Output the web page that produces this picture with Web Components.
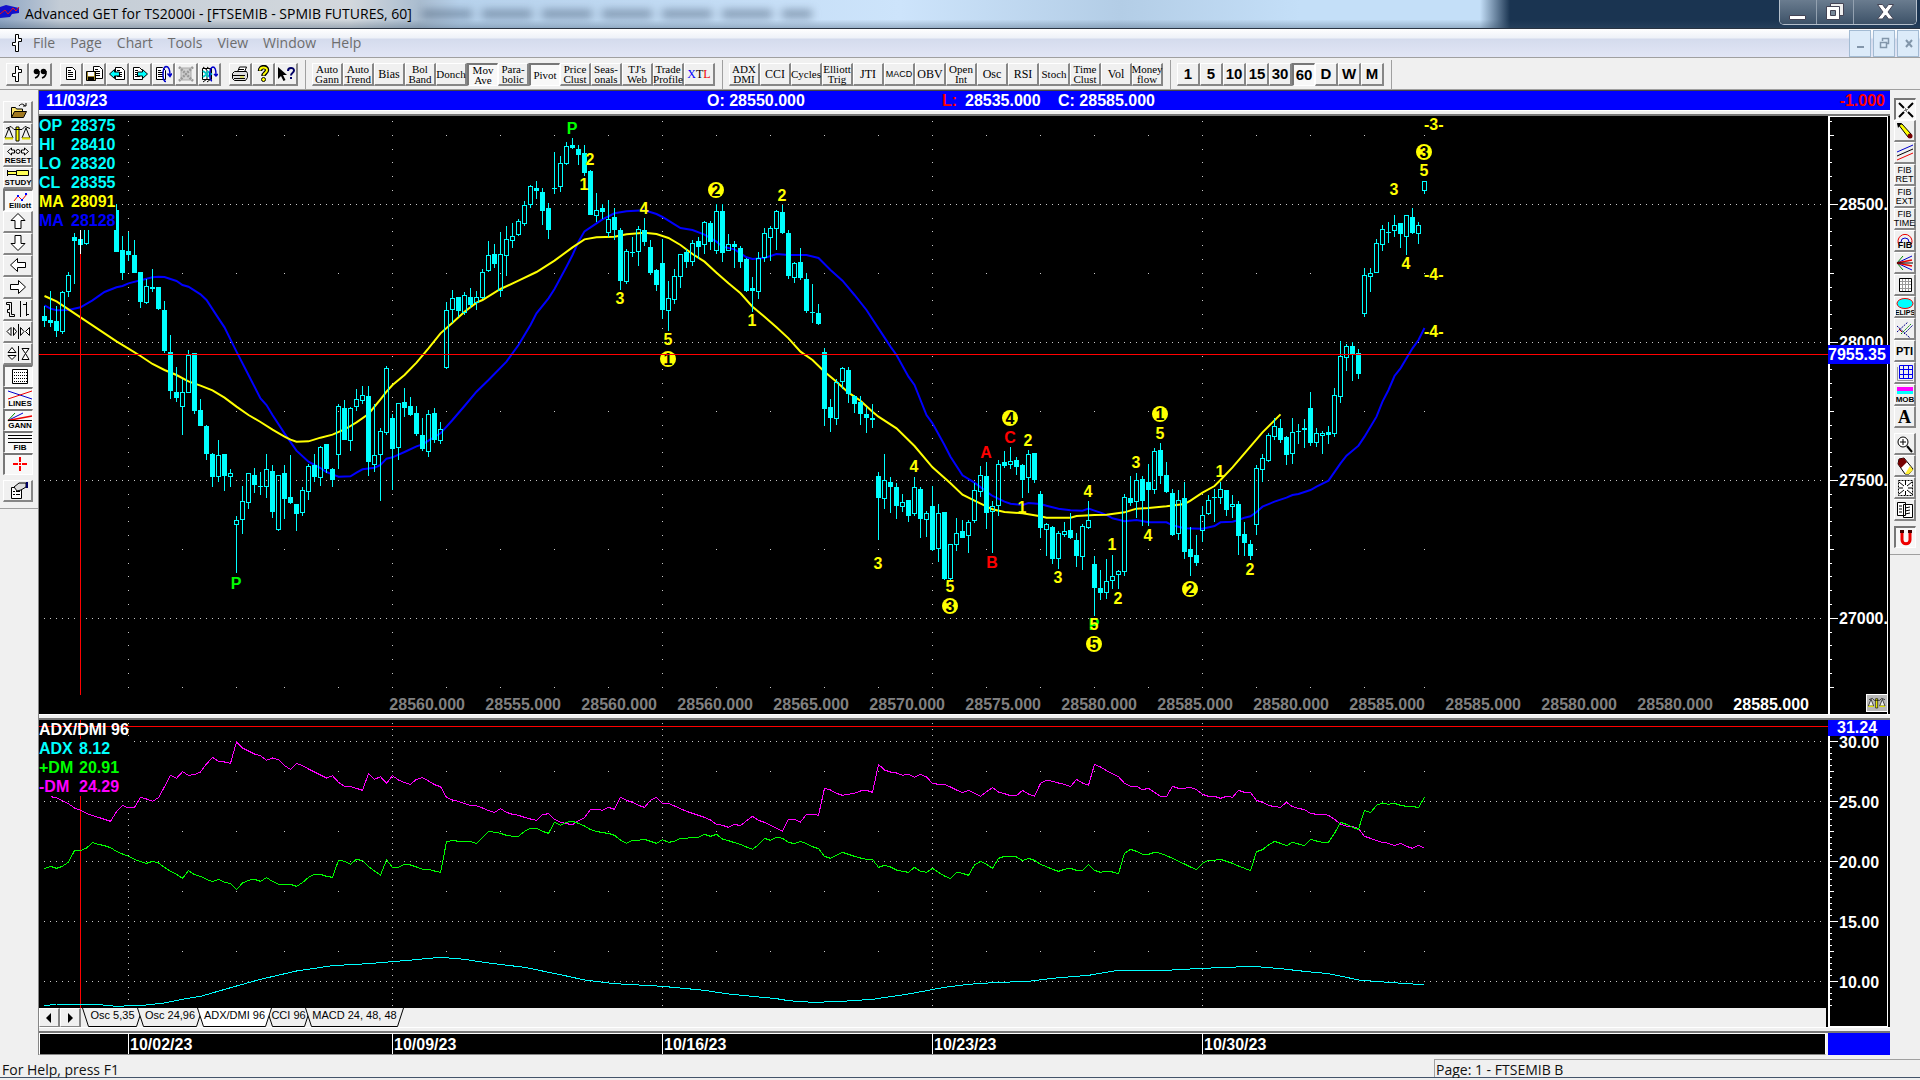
<!DOCTYPE html>
<html lang="en">
<head>
<meta charset="utf-8">
<title>Advanced GET for TS2000i</title>
<style>
    html, body {
        margin: 0;
        background: #f0f0f0;
    }
    body {
        font-family: "Liberation Sans", Arial, sans-serif;
        overflow: hidden;
    }
</style>
</head>
<body>
<get-app></get-app>

<script>
const UI_FONT = '"Open Sans", "Noto Sans", sans-serif'

// Icon drawings: [width, height, markup]
const page = (x, y) => `<path d="M${x}.5 ${y}.5h6l3 3v9h-9z" fill="#fff" stroke="#000"/><path d="M${x + 2} ${y + 3}.5h3m-3 2h5m-5 2h5m-5 2h5" stroke="#000" fill="none"/>`
const scales = `
    <path d="M13 3h3v14h-3z" fill="#ff0" stroke="#000"/>
    <path d="M3 4.5l5-2 3 3h8l3-3 5 2" fill="none" stroke="#000"/>
    <path d="M6 4L2 14h8L6 4M23 4l-4 10h8l-4-10" fill="#f0f0f0" stroke="#000"/>
    <path d="M2 14.5h8M19 14.5h8" stroke="#dd0" stroke-width="2"/>`
const label = (text, x, y, size = 8) => `<text x="${x}" y="${y}" font-size="${size}" text-anchor="middle" font-weight="bold" font-family="Liberation Sans, sans-serif">${text}</text>`

const ICONS = {
    app: [20, 18, '<path d="M0 2l6-2 13 3v5l-7 1-2 3-10 1z" fill="#11c"/><path d="M0 9l5-4 3 4 5-6 3 3 3-4" stroke="#e11" fill="none" stroke-width="1"/>'],
    bar: [12, 20, '<path d="M4.500 18.500v-6h-3v-3h3v-8h3v4h3v3h-3v10z" fill="#fff" stroke="#000"/>'],
    barSmall: [16, 18, '<path d="M6.500 16.500v-5h-3v-3h3v-7h3v3h3v3h-3v9z" fill="#fff" stroke="#000"/>'],
    quote: [16, 16, '<circle cx="4.500" cy="5.500" r="2.800"/><path d="M7 5c.5 4-1 6-4 7" fill="none" stroke="#000" stroke-width="1.500"/><circle cx="11.500" cy="5.500" r="2.800"/><path d="M14 5c.5 4-1 6-4 7" fill="none" stroke="#000" stroke-width="1.500"/>'],
    doc: [16, 16, page(3, 1)],
    save: [18, 18, page(8, 1) + '<path d="M1.500 6.500h9v9h-9z" fill="#a08a30" stroke="#000"/><path d="M3 7h6v4H3z" fill="#fff"/><path d="M3 12h6v4H3z"/>'],
    prev: [18, 16, page(7, 1) + '<path d="M1.500 8l5-4.500v2.500h5v4h-5v2.500z" fill="#0ff" stroke="#000"/>'],
    next: [18, 16, page(2, 1) + '<path d="M16.500 8l-5-4.500v2.500h-5v4h5v2.500z" fill="#0ff" stroke="#000"/>'],
    flip: [18, 18, page(2, 2) + '<path d="M12 16.500c-4 0-4-14 0-15 4 0 4 6 4 9m-2.500-2l2.500 3 2-3" fill="none" stroke="#00c" stroke-width="1.500"/>'],
    cross: [18, 18, '<path d="M4 3h10v12H4z" fill="#d0d0d0" stroke="#aaa"/><path d="M2 2l14 14M16 2L2 16" stroke="#999" stroke-width="2.500" stroke-dasharray="2 1"/>'],
    shift: [18, 18, '<path d="M2.500 3.500h9v11h-9z" fill="#fff" stroke="#000"/><path d="M3 2l4 3v9l-4 3M7 2l4 3v9l-4 3" fill="none" stroke="#000"/><path d="M3 6l4 3-4 3M7 6l4 3-4 3" stroke="#0cc" stroke-width="2" fill="none"/><path d="M12 16c-3-1-3-13 1-14 3 0 3 5 3 8m-2-1l2 2 2-2" fill="none" stroke="#00c" stroke-width="1.500"/>'],
    print: [18, 16, '<path d="M6.500 6l2-5h7l-2 5z" fill="#fff" stroke="#000"/><path d="M1.500 7.500l2-2h12l1 2v4l-2 3h-11l-2-2z" fill="#ddd" stroke="#000"/><path d="M2 9.500h12M3 12.500h11M8 3.500h5" stroke="#000"/><path d="M9 11h4" stroke="#dd0" stroke-width="1"/>'],
    help: [16, 18, '<path d="M5 6c0-5 7-5 7-1 0 3-3.500 3-3.500 6" fill="none" stroke="#000" stroke-width="4.500"/><path d="M5 5.500c0-4 7-4 7-.5 0 3-3.500 3-3.500 5.500" fill="none" stroke="#ff0" stroke-width="2"/><circle cx="8.500" cy="14.500" r="2" fill="#ff0" stroke="#000"/>'],
    whats: [18, 18, '<path d="M1 2v12l3-3 2.500 5 2-1-2.500-5h4z"/><path d="M11 6c0-4 6-4 6-.5 0 2.500-3 2-3 5M14 12v2" fill="none" stroke="#006" stroke-width="2"/>'],

    open: [28, 19, '<path d="M7.500 15.500v-10h4l1 1.500h6v3" fill="#ffe870" stroke="#000"/><path d="M7.500 15.500l3-6h12l-3 6z" fill="#a07820" stroke="#000"/><path d="M15 4c2-3 5-2 6 0m1-3v3h-3" stroke="#000" fill="none"/>'],
    scales: [30, 19, scales],
    reset: [28, 19, '<path d="M3.500 5.500l4-3.500v2h3v3h-3v2zM24.500 5.500l-4-3.500v2h-3v3h3v2z" fill="#fff" stroke="#000"/><circle cx="14" cy="5.500" r="2" fill="#fff" stroke="#000"/>' + label('RESET', 14, 17)],
    study: [28, 19, '<path d="M3.500 2v6M3.500 3.500h9v3h-9M12.500 2.500h12v5h-12z" fill="#ff5" stroke="#000"/>' + label('STUDY', 14, 17)],
    elliott: [28, 19, '<path d="M9 10l4-5 4 4 5-6" fill="none" stroke="#e00"/><path d="M12 4h2v2h-2zM16 8h2v2h-2zM20 2h2v2h-2z" fill="#00f"/>' + label('Elliott', 15, 17, 8)],
    up: [28, 19, '<path d="M14 1.500l7 7h-4v8h-6v-8H7z" fill="#fff" stroke="#000"/>'],
    down: [28, 19, '<path d="M14 16.500l7-7h-4v-8h-6v8H7z" fill="#fff" stroke="#000"/>'],
    left: [28, 19, '<path d="M6.500 9l7-6.500v4h8v5h-8v4z" fill="#fff" stroke="#000"/>'],
    right: [28, 19, '<path d="M21.500 9l-7-6.500v4h-8v5h8v4z" fill="#fff" stroke="#000"/>'],
    bars: [28, 19, '<path d="M2.500 4.500v-2h5v12h3v2h-5v-4h-2v-3h2v-5zM16.500 1v16M19 4.500h3M22.500 2v14M22 14.500h3" fill="none" stroke="#000"/>'],
    narrow: [28, 19, '<path d="M7 5.500v8L3 9.500zM9.500 5.500v8l3-4zM16.500 5.500v8l3.500-4zM25.500 5.500v8l-4-4z" fill="#fff" stroke="#000"/><path d="M14.500 2v15" stroke="#000"/>'],
    tall: [28, 19, '<path d="M4 8.500h8L8 3.500zM4 11.500h8l-4 4zM18 4.500h7l-3.500 5zM18 15.500h7l-3.500-6z" fill="#fff" stroke="#000"/><path d="M14.500 2v15" stroke="#000"/>'],
    dots: [28, 19, '<path d="M7.500 2.500h15v14h-15z" fill="#fff" stroke="#000"/><path d="M9 5.500h13M9 8.500h13M9 11.500h13M9 14.500h13" stroke="#000" stroke-dasharray="1 1"/>'],
    lines: [28, 19, '<path d="M3 2l24 8" stroke="#00c"/><path d="M3 10l24-8" stroke="#e00"/>' + label('LINES', 15, 17)],
    gann: [28, 19, '<path d="M3 9.500L10 2" stroke="#080"/><path d="M3 9.500L18 2" stroke="#00c"/><path d="M3 9.500L27 5" stroke="#e00" stroke-width="1.500"/><path d="M3 9.500h24" stroke="#000"/>' + label('GANN', 15, 17)],
    fib: [28, 19, '<path d="M3 2.500h24M3 5.500h24M3 9.500h24" stroke="#000"/>' + label('FIB', 15, 17)],
    plus: [28, 19, '<path d="M15 2v5M15 11v5M8 9h5M17 9h5M15 8v2" stroke="#f00" stroke-width="2"/>'],
    props: [28, 19, '<path d="M7.500 6.500h10v11h-10z" fill="#fff" stroke="#000"/><path d="M9 10.500h2m1 0h4m-7 3h2m1 0h4" stroke="#000"/><path d="M10 6l5-4h7v4l-5 3-4 1z" fill="#ddd" stroke="#000"/><path d="M22 1h2v6h-2z" fill="#006"/>'],

    x: [18, 18, '<path d="M2 2l5 5M16 2l-5 5M2 16l5-5M16 16l-5-5" stroke="#000" stroke-width="2"/><path d="M8 8h2v2H8z" fill="#fff" stroke="#000" stroke-dasharray="1 1"/>'],
    pencil: [18, 18, '<path d="M2 2l4 0 9 10-3 3z" fill="#ff0" stroke="#000"/><path d="M1 1h5l-4 5z"/><circle cx="14" cy="14" r="2.500" fill="#700"/>'],
    channel: [18, 18, '<path d="M1 8l16-7" stroke="#00c"/><path d="M1 12l16-7" stroke="#000"/><path d="M1 16l16-7" stroke="#e00"/>'],
    arc: [18, 18, '<path d="M3 13a7 7 0 1 1 12 0" fill="none" stroke="#e00"/><path d="M5 10a4 4 0 1 1 8 0" fill="none" stroke="#00c"/>' + label('FIB', 9, 16, 9)],
    fan: [18, 18, '<path d="M1 9L7 2M1 9l6 7" stroke="#080"/><path d="M1 9l15-7M1 9l15 7" stroke="#00c"/><path d="M1 9l15-3M1 9l15 3" stroke="#e00" stroke-width="1.500"/><path d="M1 9h16" stroke="#000"/>'],
    grid: [18, 18, '<path d="M3.500 2.500h12v13h-12z" fill="#fff" stroke="#000"/><path d="M4 5.500h11M4 8.500h11M4 12.500h11M6.500 3v12M9.500 3v12M12.500 3v12" stroke="#999"/>'],
    ellipse: [18, 18, '<ellipse cx="9" cy="5.500" rx="8" ry="5" fill="#0ff" stroke="#e00"/>' + label('ELIPS', 9, 17, 7)],
    fork: [18, 18, '<path d="M1 12L12 2M8 14l9-9M1 6l13 12" stroke="#008" stroke-dasharray="2 1"/><path d="M3 9l3 3" stroke="#a00"/><path d="M5 14L15 4" stroke="#080" stroke-dasharray="2 1"/>'],
    bluegrid: [18, 18, '<path d="M3.500 1.500h13v13h-13zM7.500 2v12M12.500 2v12M4 5.500h12M4 10.500h12" fill="none" stroke="#00e"/><path d="M1.500 3v13.500H17" fill="none" stroke="#999"/>'],
    mob: [18, 18, '<path d="M1 1h16v4H1z" fill="#f0f"/><path d="M1 5h16v3H1z" fill="#0ff"/>' + label('MOB', 9, 16, 8)],
    zoom: [18, 18, '<circle cx="7" cy="7" r="5" fill="#fff" stroke="#000"/><path d="M4 7h6M7 4v6" stroke="#000"/><path d="M11 11l5 6" stroke="#000" stroke-width="2"/>'],
    eraser: [18, 18, '<path d="M3 2l5-1 9 11-4 5h-4L2 7z" fill="#fff" stroke="#000"/><path d="M3 2l5-1 3 4-6 6-3-4z" fill="#700"/><path d="M14 9l3 4-4 4h-4z" fill="#fe3"/>'],
    tiles: [18, 18, '<path d="M2.500 1.500h14v15h-14z" fill="#fff" stroke="#000" stroke-dasharray="2 1"/><path d="M3 3l5 4M16 3l-5 4M3 15l5-4M16 15l-5-4M9.500 2v4M9.500 12v4M3 9h4M12 9h4" stroke="#000"/>'],
    pages: [18, 18, '<path d="M1.500 1.500h8v13h-8zM7.500 3.500h9v13h-9z" fill="#fff" stroke="#000"/><path d="M3 5h3M3 8h3M3 11h3M9 7l5-1M9 10l5-1M9 13l5-1" stroke="#000"/>'],
    magnet: [18, 18, '<path d="M5 3v8c0 5 8 5 8 0V3" fill="none" stroke="#e00" stroke-width="3"/><path d="M3 1h4v3H3zM11 1h4v3h-4z" fill="#400"/>']
}

const drawIcon = name => {
    const [w, h, markup] = ICONS[name]
    return `<svg width="${w}" height="${h}" viewBox="0 0 ${w} ${h}" aria-hidden="true">${markup}</svg>`
}

// Base class: every element renders its styles and its HTML once
class GetElement extends HTMLElement {

    constructor() {
        super()
        this.attachShadow({ mode: 'open' })
    }

    connectedCallback() {
        this.shadowRoot.innerHTML = `
            <style>${this._getStyles()}</style>
            ${this._getHTML()}
        `
    }

    _getStyles() { return '' }

    _getHTML() { return '' }

}

class ToolButton extends GetElement {

    _getStyles() {
        return `
            :host { display: block; width: 31px; height: 23px; }
            :host([size=square]) { width: 23px; }
            :host([size=side]) { width: 30px; height: 22px; }
            :host([size=edge]) { width: 22px; height: 22px; }
            button {
                display: flex;
                align-items: center;
                justify-content: center;
                width: 100%;
                height: 100%;
                padding: 0;
                border: solid;
                border-width: 1px 2px 2px 1px;
                border-color: #fff #868686 #868686 #fff;
                background: #f0f0f0;
                color: #000;
                font: 12px/10px "Liberation Serif", "Times New Roman", serif;
                text-align: center;
                white-space: pre;
            }
            :host([face=long]) button { font-size: 11px; }
            :host([face=small]) button { font: 9px/10px "Liberation Sans", sans-serif; }
            :host([face=tiny]) button { font: 9px/9px "Liberation Sans", sans-serif; }
            :host([face=time]) button { font: bold 15px/16px "Liberation Sans", sans-serif; }
            :host([face=bold]) button { font: bold 11px/12px "Liberation Sans", sans-serif; }
            :host([face=letter]) button { font: bold 18px/18px "Liberation Serif", serif; }
            :host([pressed]) button {
                border-width: 2px 1px 1px 2px;
                border-color: #777 #fff #fff #777;
                background: #f8f8f8;
            }
            svg { flex: none; display: block; }
        `
    }

    _getHTML() {
        const icon = this.getAttribute('icon')
        const name = this.getAttribute('name') || icon
        return icon
            ? `<button aria-label="${name}">${drawIcon(icon)}</button>`
            : '<button><span><slot></slot></span></button>'
    }

}

class TitleBar extends GetElement {

    _getStyles() {
        return `
            :host {
                display: flex;
                align-items: center;
                height: 28px;
                border-bottom: 1px solid #2a3442;
                background:
                    linear-gradient(180deg, transparent 70%, rgba(60, 85, 110, .35)),
                    linear-gradient(90deg, #8fa6c4 0, #c3ccd6 60px, #d3d8dd 350px, #a9bccf 420px, #b7d2ec 460px, #cde4fb 900px, #b3cde6 1120px, #c4dff8 1300px, #c4dff8 1480px, #1a3451 1510px);
                font: 14px/20px ${UI_FONT};
                color: #000;
            }
            .title { flex: none; margin-left: 5px; }
            .haze {
                width: 390px;
                height: 8px;
                margin-left: 10px;
                background: repeating-linear-gradient(90deg, rgba(60, 80, 105, .5) 0 50px, transparent 50px 60px);
                filter: blur(4px);
            }
            .buttons {
                display: flex;
                align-self: flex-start;
                margin-left: auto;
                margin-right: 3px;
                border: 1px solid #b5c0cc;
                border-top: none;
                border-radius: 0 0 5px 5px;
                overflow: hidden;
            }
            button {
                width: 37px;
                height: 24px;
                padding: 0;
                border: none;
                border-right: 1px solid #93a1b0;
                background: linear-gradient(#6a7c8f, #3d5268);
            }
            button:last-child { width: 62px; border: none; }
            button svg { display: block; margin: 0 auto; }
        `
    }

    _getHTML() {
        return `
            ${drawIcon('app')}
            <span class="title">Advanced GET for TS2000i - [FTSEMIB - SPMIB FUTURES, 60]</span>
            <span class="haze"></span>
            <div class="buttons">
                <button aria-label="Minimize"><svg width="20" height="20"><path d="M1.500 13.500h16v4h-16z" fill="#fff" stroke="#445"/></svg></button>
                <button aria-label="Restore"><svg width="22" height="20"><path d="M6.500 1.500h13v12h-13z" fill="#eee" stroke="#445"/><path d="M2.500 4.500h13v13h-13z" fill="#fff" stroke="#445"/><path d="M6.500 8.500h5v5h-5z" fill="#789" stroke="#445"/></svg></button>
                <button aria-label="Close"><svg width="22" height="20"><path d="M3.500 2.500h5l3 4 3-4h5l-5.500 7.500 5.500 7h-5l-3-4-3 4h-5l5.500-7z" fill="#fff" stroke="#445"/></svg></button>
            </div>
        `
    }

}

class MenuBar extends GetElement {

    _getStyles() {
        return `
            :host {
                display: flex;
                align-items: center;
                height: 28px;
                padding-left: 11px;
                border-bottom: 1px solid #a0a0a0;
                background: linear-gradient(#fff, #eef1f8 9px, #d4dbed 10px, #e2e6f6);
                font: 14px/20px ${UI_FONT};
            }
            nav { display: flex; gap: 15px; margin-left: 10px; }
            a { color: #6d6d6d; text-decoration: none; }
            .buttons { display: flex; gap: 2px; margin-left: auto; padding-right: 1px; }
            button {
                width: 22px;
                height: 27px;
                padding: 0;
                border: 1px solid #a3bbd3;
                background: #dcebf9;
            }
            button svg { display: block; margin: 0 auto; }
        `
    }

    _getHTML() {
        const items = ['File', 'Page', 'Chart', 'Tools', 'View', 'Window', 'Help']
        return `
            ${drawIcon('bar')}
            <nav>${items.map(item => `<a href="#">${item}</a>`).join('')}</nav>
            <div class="buttons">
                <button aria-label="Minimize chart"><svg width="14" height="14"><path d="M4 11h7" stroke="#8296aa" stroke-width="2"/></svg></button>
                <button aria-label="Restore chart"><svg width="14" height="14"><path d="M5.500 5v-2.500h6v5h-2M3.500 6.500h6v5h-6z" fill="none" stroke="#8296aa" stroke-width="1.500"/></svg></button>
                <button aria-label="Close chart"><svg width="14" height="14"><path d="M5 4l6 7M11 4l-6 7" stroke="#8296aa" stroke-width="2"/></svg></button>
            </div>
        `
    }

}

class ToolStrip extends GetElement {

    _getStyles() {
        return `
            :host {
                display: flex;
                height: 29px;
                margin-top: 2px;
                border-bottom: 1px solid #a0a0a0;
            }
            .group {
                display: flex;
                align-items: center;
                padding: 0 7px 0 6px;
                border-right: 1px solid #a0a0a0;
            }
            .group:first-child { padding-right: 6px; }
            .gap { width: 8px; }
            .blue { color: #00f; }
            .red { color: #e00; }
        `
    }

    _getHTML() {
        const icons = names => names.map(name => `<tool-button size="square" icon="${name}"></tool-button>`).join('')
        const study = text => {
            const pressed = ['Mov\nAve', 'Pivot'].includes(text) ? 'pressed' : ''
            const long = text.includes('\n') || text.length > 4
            const face = text === 'MACD' ? 'small' : long ? 'long' : 'plain'
            return `<tool-button ${pressed} face="${face}">${text}</tool-button>`
        }
        const studies = ['Auto\nGann', 'Auto\nTrend', 'Bias', 'Bol\nBand', 'Donch', 'Mov\nAve', 'Para-\nbolic', 'Pivot', 'Price\nClust', 'Seas-\nonals', "TJ's\nWeb", 'Trade\nProfile']
        const indicators = ['ADX\nDMI', 'CCI', 'Cycles', 'Elliott\nTrig', 'JTI', 'MACD', 'OBV', 'Open\nInt', 'Osc', 'RSI', 'Stoch', 'Time\nClust', 'Vol', 'Money\nflow']
        const times = ['1', '5', '10', '15', '30', '60', 'D', 'W', 'M']
        return `
            <div class="group">
                ${icons(['barSmall', 'quote'])}
                <span class="gap"></span>
                ${icons(['doc', 'save', 'prev', 'next', 'flip', 'cross', 'shift'])}
                <span class="gap"></span>
                ${icons(['print', 'help', 'whats'])}
            </div>
            <div class="group">
                ${studies.map(study).join('')}
                <tool-button><span class="blue">X</span>T<span class="red">L</span></tool-button>
            </div>
            <div class="group">${indicators.map(study).join('')}</div>
            <div class="group">
                ${times.map(time => `<tool-button size="square" face="time" ${time === '60' ? 'pressed' : ''}>${time}</tool-button>`).join('')}
            </div>
        `
    }

}

class SideBar extends GetElement {

    _getStyles() {
        return `
            :host {
                display: flex;
                flex-direction: column;
                align-self: flex-start;
                flex: none;
                border-bottom: 1px solid #a0a0a0;
            }
            :host([side=left]) { width: 35px; padding: 11px 0 6px 3px; }
            :host([side=right]) { width: 26px; padding: 8px 0 6px 4px; }
            .gap { height: 5px; }
        `
    }

    _getHTML() {
        const pressed = ['elliott', 'dots', 'lines', 'gann', 'fib', 'plus', 'x', 'magnet']
        if (this.getAttribute('side') === 'left') {
            const names = ['open', 'scales', 'reset', 'study', 'elliott', 'up', 'down', 'left', 'right', 'bars', 'narrow', 'tall', 'dots', 'lines', 'gann', 'fib', 'plus', 'gap', 'props']
            return names.map(name => name === 'gap'
                ? '<span class="gap"></span>'
                : `<tool-button size="side" icon="${name}" ${pressed.includes(name) ? 'pressed' : ''}></tool-button>`).join('')
        }
        const icon = name => `<tool-button size="edge" icon="${name}" ${pressed.includes(name) ? 'pressed' : ''}></tool-button>`
        const text = (value, face) => `<tool-button size="edge" face="${face}">${value}</tool-button>`
        return [
            icon('x'), icon('pencil'), icon('channel'),
            text('FIB\nRET', 'tiny'), text('FIB\nEXT', 'tiny'), text('FIB\nTIME', 'tiny'),
            icon('arc'), icon('fan'), icon('grid'), icon('ellipse'), icon('fork'),
            text('PTI', 'bold'), icon('bluegrid'), icon('mob'), text('A', 'letter'),
            '<span class="gap"></span>',
            icon('zoom'), icon('eraser'), icon('tiles'), icon('pages'),
            '<span class="gap"></span>', icon('magnet')
        ].join('')
    }

}

class QuoteLine extends GetElement {

    _getStyles() {
        return `
            :host {
                display: flex;
                height: 19px;
                padding: 0 5px 0 7px;
                border-top: 1px solid #444;
                background: #00f;
                color: #fff;
                font: bold 16px/20px "Liberation Sans", Arial, sans-serif;
                white-space: nowrap;
            }
            .date { width: 661px; }
            .open { width: 235px; }
            .low { width: 116px; }
            .red { color: #f00; }
            .low .red { display: inline-block; width: 23px; }
            .change { margin-left: auto; }
        `
    }

    _getHTML() {
        return `
            <span class="date">11/03/23</span>
            <span class="open">O: 28550.000</span>
            <span class="low"><span class="red">L:</span>28535.000</span>
            <span>C: 28585.000</span>
            <span class="red change">-1.000</span>
        `
    }

}

// Bars stand 6px apart, the first one 5px into the plot
const barX = bar => 5 + 6 * bar
const LAST_BAR = 230
const WEEKS = [14, 58, 103, 148, 193]
const DAYS = [14, 23, 32, 40, 49, 58, 67, 76, 85, 94, 103, 112, 121, 130, 139, 148, 157, 166, 175, 184, 193, 202, 211, 220, LAST_BAR]

// Levels of both plots are kept in thirds of a pixel
const PRICE_TOP = 26
const DMI_TOP = 20

const numbers = text => text.trim().split(/[\s,]+/).map(Number)

// "bar level bar level ..."
const readPoints = (text, top, base = 0) => {
    const values = numbers(text)
    const points = []
    for (let i = 0; i < values.length; i += 2) {
        points.push(`${barX(values[i]) + 0.5},${(values[i + 1] + base) / 3 - top}`)
    }
    return points.join(' ')
}

const readLevels = (text, first) => numbers(text)
    .map((level, i) => `${barX(first + i) + 0.5},${level / 3 - DMI_TOP}`)
    .join(' ')

// Candles: high, body top, body bottom, low. "f" is a filled body, "o" a hollow one
const CANDLES = [
    { first: 0, base: 0, bars: `
        f648,678,693,711 f603,690,701,711 f648,693,723,741 o603,607,724,732 o546,556,605,621
        f430,441,453,582 f400,447,465,491 o360,400,461,467 o330,360,390,400 o330,360,390,400
        o330,360,390,400 o330,360,390,400 f343,360,486,486 f438,480,549,570 f427,483,495,513
        f450,495,549,549 f546,546,636,654 o567,589,638,642 f537,591,597,606 f591,591,657,660
        f633,660,783,789 f735,786,903,927 f831,906,924,936 o867,907,949,1035 o780,796,908,908
        f789,789,963,972 f927,960,1008,1008 f1005,1008,1092,1110 f1089,1092,1161,1191 o1050,1096,1160,1176
        f1092,1092,1158,1203 o1137,1150,1160,1191 o1278,1291,1304,1451 o1188,1234,1289,1332 o1150,1151,1238,1257
        f1134,1155,1185,1209 f1146,1189,1192,1215 o1092,1138,1190,1224 f1125,1143,1266,1284 o1155,1156,1319,1323
        f1125,1149,1227,1287 f1095,1221,1239,1242 f1242,1242,1272,1323 o1191,1201,1268,1278 o1122,1129,1205,1230
        f1092,1125,1161,1176 o1068,1072,1162,1188 f1062,1062,1137,1149 f1134,1137,1170,1191 o942,949,1094,1137
        f930,954,1050,1050 o951,955,1052,1083 o897,928,950,963 o888,916,932,942 f888,918,1116,1158
        o942,1096,1124,1146 o1014,1024,1094,1233 o828,835,1028,1035 f972,984,1077,1200 o939,940,1073,1110
        f894,936,954,981 f921,948,975,978 f948,969,1032,1038 f984,1035,1077,1083 o960,973,1085,1101
        f954,969,1050,1059 o996,1018,1052,1062 o636,661,832,837 o600,625,658,699 f621,621,663,681
        o606,616,668,675 f594,621,645,654 o603,623,636,660 o537,547,622,627 o453,496,542,546
        f462,492,522,534 o426,493,602,621 o408,448,497,558 o399,438,451,474 o387,394,434,438
        o333,346,401,408 o285,289,344,354 f273,294,303,327 f294,306,363,405 f339,354,420,447
        f186,295,298,312 o198,220,290,306 o156,169,220,225 f144,165,174,177 f165,177,195,225
        f165,189,249,258 f240,243,375,375 o309,361,377,396 f342,354,366,387 o330,388,428,441
        f354,381,420,450 f414,420,573,600 o477,484,574,582 f441,486,489,501 o408,418,485,528
        f384,420,456,468 f450,471,549,555 f537,540,585,603 f447,519,660,687 o573,625,662,723
        o537,559,629,642 o492,493,560,594 f477,486,516,534 o450,460,515,528 f441,453,471,507
        o393,397,464,492 f393,399,456,480 o342,364,482,492 f342,363,489,516 o432,463,482,484
        f453,462,471,534 f468,474,516,534 f504,507,603,606 f561,594,603,666 o486,505,605,627
        o414,430,503,516 o408,415,443,513 o360,364,416,480 f345,366,429,432 f420,429,558,567
        o516,520,563,579 f474,516,564,570 f549,567,663,669 f582,667,670,699 f642,669,702,705
        f774,786,957,1008 f927,951,984,1026 o867,877,986,1005 o831,835,875,897 f831,840,912,939
        f915,918,942,969 f918,936,972,1005 f951,972,984,1029 f942,984,990,1014` },
    { first: 139, base: 870, bars: `
        f276,288,354,480 o222,301,355,387 f291,306,321,399 f309,321,378,417 o342,367,380,396
        f360,360,408,426 o291,322,401,408 f321,327,417,474 o393,400,419,471 f318,378,510,513
        o372,400,506,546 f396,396,597,600 o492,493,596,600 o414,460,494,513 f420,453,474,474
        o420,427,467,519 o309,331,422,429 o258,286,335,351 f246,288,399,447 o363,380,395,519
        o240,253,377,408 f213,246,258,264 o201,244,254,267 f231,240,261,285 f252,255,300,354
        o210,223,293,339 f219,219,300,309 f333,342,444,474 o429,434,448,528 f438,441,537,552
        o453,460,536,567 o426,454,463,471 f399,450,474,477 f459,480,528,561 o432,439,530,570
        o363,421,443,447 f528,552,624,708 f570,624,639,660 o537,604,638,657 o525,589,602,627
        o570,574,584,627 o342,352,575,588 f288,354,369,378 o279,301,365,414 f288,297,363,438
        f252,306,330,438 o204,214,329,342 f189,210,288,312 f246,285,336,339 f327,339,465,468
        o330,361,461,480 f306,354,516,537 f441,507,531,588 f465,525,549,558 o378,406,452,486
        o345,361,401,405 f327,351,355,426 o306,328,353,372 f330,330,390,408 o345,374,380,414
        f363,372,468,525 f426,462,489,528 f480,492,528,540 o255,265,433,465 o222,235,268,306
        o159,166,241,246 o114,139,169,180 f117,144,180,189 f168,171,225,255 o114,157,220,252
        f132,153,156,192 f117,145,150,204 f36,84,189,198 o144,160,187,201 o153,160,166,222
        f138,156,165,192 o24,46,160,171` },
    { first: 216, base: 0, bars: `
        o754,799,919,939 o762,769,802,843 f756,769,792,873 f777,789,852,867 o534,556,670,681
        o534,550,559,606 o447,460,548,550 o405,418,463,483 f396,426,429,459 o375,406,421,441
        f399,400,432,474 o376,377,439,495 f354,381,429,432 o396,406,430,462 o273,274,301,312` }
]

const YELLOW_MA = [
    readPoints(`0 618 2 634 4 658 6 682 8 706 10 730 12 754 14 776 16 798 18 822 20 840 22 855 24 874 26 887 28 901 30 923
        32 950 34 975 36 996 38 1019 40 1040 41 1049 42 1055 44 1054 46 1043 48 1034 50 1018 51 1008 52 997 54 972 56 928
        57 905 58 885 60 855 62 818 64 775 66 730 68 698 70 665 72 638 73 630 76 597 79 572 82 546 85 512 88 472 90 448
        92 442 95 440 97 433 100 428 102 432 104 444 106 465 108 492 110 515 112 548 114 580 116 610 118 650 120 680
        122 712 124 745 126 785 128 810 130 845 132 875 134 908 136 932 138 965`, PRICE_TOP),
    readPoints(`139 110 142 145 145 198 148 262 151 310 153 344 155 362 158 388 160 396 163 400 166 409 167 413 171 413
        172 408 175 405 177 404 180 397 182 386 184 384 187 379 190 372 191 362 193 338 195 318 196 300 198 262 200 220
        203 157 206 103`, PRICE_TOP, 870)
].join(' ')

const BLUE_MA = [
    readPoints(`0 646 1 656 2 661 4 660 6 652 8 631 10 606 12 592 13 588 14 580 16 571 18 562 19 560 20 561 22 573 23 585
        24 590 26 613 27 630 29 685 30 712 32 785 34 855 36 925 37 945 38 975 40 1030 42 1082 44 1115 46 1134 47 1146
        48 1153 49 1160 51 1159 52 1148 53 1138 55 1133 56 1125 57 1106 58 1102 60 1086 62 1069 63 1063 64 1052 66 1030
        68 990 70 948 72 905 74 870 77 815 79 765 81 705 82 670 84 625 85 597 87 530 88 495 89 455 90 424 92 400 93 388
        95 370 97 364 100 361 102 372 103 381 105 403 106 414 108 420 110 434 112 455 113 470 115 478 117 502 118 507
        120 504 122 492 124 495 127 495 129 504 131 540 133 572 135 615 137 660 138 688 139 715 141 770 142 795 144 860`, PRICE_TOP),
    readPoints(`145 15 147 105 148 130 150 195 151 230 153 286 155 308 157 335 158 348 160 365 161 371 163 375 164 369
        166 372 167 377 169 386 171 391 173 392 174 386 175 392 176 398 177 405 178 415 180 424 182 420 184 427 187 427
        188 436 189 440 190 445 193 446 195 438 196 427 198 425 199 420 200 413 201 409 202 396 203 380 205 365 207 353
        208 345 209 342 211 330 212 320 214 302 216 250 217 227 219 197 220 170 221 140 222 110 223 65 224 30 225 -12
        226 -35 227 -65 228 -95 229 -120 230 -156`, PRICE_TOP, 870)
].join(' ')

const MINUS_DM = readLevels(`290 293 302 311 324 331 340 347 352 358 364 335 316 324 322 292 297 304 293 260 226 235 215 226
    224 216 192 172 184 186 190 126 144 153 162 167 181 174 179 197 208 190 197 207 216 225 234 227 247 259 260 265 271
    221 238 230 250 227 240 248 253 238 233 243 254 260 292 300 304 311 316 317 324 332 337 326 337 343 346 352 357 361
    344 341 358 367 371 374 362 353 328 328 331 322 328 292 301 307 316 322 301 292 310 310 318 326 334 340 346 352 360
    373 376 382 373 377 362 349 361 367 376 385 393 358 358 366 343 343 346 265 270 280 286 283 280 273 271 277 193 210
    216 219 226 223 232 223 231 250 253 253 261 270 278 271 280 289 275 263 276 281 287 287 271 282 289 250 241 244 249
    253 260 238 249 256 193 201 212 221 230 250 259 259 269 265 277 289 290 259 265 265 262 269 283 289 289 295 289 292
    271 277 278 301 307 316 320 322 307 320 325 329 340 343 343 346 358 372 379 380 386 409 415 422 427 430 437 430 439
    445 436 445`, 1)

const PLUS_DM = readLevels(`506 499 505 499 486 452 452 444 428 433 437 443 454 462 469 478 485 490 484 489 502 514 523 535
    512 524 529 538 545 538 547 551 569 549 541 538 544 533 544 553 553 553 559 548 532 523 523 529 532 481 484 493 478
    482 500 513 525 480 502 502 493 495 501 508 508 513 517 426 421 424 424 424 431 412 394 397 400 406 409 409 394 385
    385 394 400 367 376 367 364 370 378 389 394 398 400 406 420 430 421 421 418 424 430 419 427 424 415 415 412 412 403
    409 403 417 422 428 433 441 448 434 415 421 412 415 427 431 424 431 440 446 469 475 466 457 463 469 474 478 478 502
    496 501 510 514 517 502 514 517 505 517 528 536 517 520 526 495 484 493 505 475 469 469 471 482 475 481 493 500 508
    514 508 505 511 512 493 511 517 514 516 521 460 448 454 463 463 457 460 467 475 484 492 501 509 490 481 481 478 484
    490 498 505 512 455 449 435 424 430 437 427 432 437 418 423 427 427 400 367 373 382 388 331 338 316 309 313 310 316
    319 319 323 292`, 0)

const ADX = readPoints(`0 918 2 912 8 912 12 919 17 915 20 909 23 898 26 889 32 858 36 838 42 813 48 797 54 791 60 782
    66 772 70 778 74 789 80 802 86 824 90 840 95 851 103 859 110 871 114 882 118 889 122 896 124 902 128 907 132 905
    138 898 144 882 150 862 154 853 158 848 164 844 168 835 174 826 179 811 187 811 193 805 200 800 202 800 206 806
    210 814 214 821 217 832 219 840 224 847 227 851 230 854`, DMI_TOP)

// Elliott wave labels: text, bar, baseline, colour
const WAVES = [
    ['P', 88, 18, '#0f0'], ['P', 32, 473, '#0f0'], ['P', 175, 514, '#0f0'],
    ['2', 91, 49], ['1', 90, 74], ['4', 100, 98], ['3', 96, 188], ['5', 104, 229], ['2', 123, 85], ['1', 118, 210],
    ['4', 145, 356], ['3', 139, 453], ['5', 151, 476], ['2', 164, 330], ['1', 163, 397], ['4', 174, 381],
    ['3', 169, 467], ['1', 178, 434], ['2', 179, 488], ['5', 175, 514], ['3', 182, 352], ['4', 184, 425],
    ['5', 186, 323], ['1', 196, 361], ['2', 201, 459], ['5', 230, 60], ['3', 225, 79], ['4', 227, 153],
    ['A', 157, 342, '#f00'], ['B', 158, 452, '#f00'], ['C', 161, 327, '#f00']
]
const CIRCLED = [['2', 112, 74], ['1', 104, 243], ['3', 151, 490], ['4', 161, 302], ['5', 175, 528], ['1', 186, 298], ['2', 191, 473], ['3', 230, 36]]
const TARGETS = [['-3-', 14], ['-4-', 164], ['-4-', 221]]

const PLOT_STYLES = `
    :host {
        display: grid;
        grid-template-columns: minmax(0, 1fr) 62px;
        background: #000;
        font: bold 16px/19px "Liberation Sans", Arial, sans-serif;
    }
    .plot { position: relative; overflow: hidden; }
    svg { display: block; width: 100%; font: inherit; }
    .legend {
        position: absolute;
        top: 0;
        left: 0;
        border-spacing: 0;
    }
    .legend td, .legend th { padding: 0; text-align: left; font: inherit; background: #000; }
    .axis { position: relative; overflow: hidden; color: #fff; }
    .axis svg { width: 62px; }
    .marker {
        position: absolute;
        left: 0;
        right: 0;
        height: 19px;
        line-height: 19px;
        background: #00f;
        white-space: nowrap;
    }
`

const dot = (x, y) => `<path d="M${x} ${y}h1v1h-1z"/>`

// Dotted lines at the major levels and weeks, single dots halfway between them
const drawGrid = ({ majors, minors, columnTops }) => `
    <g fill="#c8c8c8" shape-rendering="crispEdges">
        ${majors.map(y => `<line x1="5" x2="1783" y1="${y + 0.5}" y2="${y + 0.5}" stroke="#c8c8c8" stroke-dasharray="1 5"/>`).join('')}
        ${WEEKS.map(bar => columnTops.map(y => dot(barX(bar), y)).join('')).join('')}
        ${minors.map(y => DAYS.map(bar => dot(barX(bar), y)).join('')).join('')}
    </g>
`

const range = (from, to, step) => {
    const out = []
    for (let value = from; value <= to; value += step) out.push(Math.round(value))
    return out
}

class PriceChart extends GetElement {

    _getStyles() {
        return `
            ${PLOT_STYLES}
            :host { height: 598px; }
            .legend td:first-child { width: 32px; }
            .legend td:last-child { width: 44px; }
            .cyan { color: #0ff; }
            .yellow { color: #ff0; }
            .blue { color: #00f; }
            .axis svg { height: 598px; }
            .plot svg { height: 598px; }
            .marker { top: 229px; }
            .levels {
                position: absolute;
                right: 19px;
                bottom: 0;
                display: grid;
                grid-template-columns: repeat(15, 96px);
                justify-items: end;
                color: #808080;
            }
            .levels b:last-child { color: #fff; }
            .scale {
                position: absolute;
                right: 2px;
                bottom: 2px;
                width: 22px;
                height: 18px;
                padding: 0;
                border: 1px solid #fff;
                background: #b8b8b8;
            }
            .scale svg { width: 20px; height: 16px; }
        `
    }

    _drawCandles() {
        return CANDLES.map(({ first, base, bars }) => bars.trim().split(/\s+/).map((bar, i) => {
            const x = barX(first + i)
            const filled = bar[0] === 'f'
            const [high, top, bottom, low] = bar.slice(1).split(',').map(v => Math.floor((Number(v) + base) / 3) - PRICE_TOP)
            const wick = `M${x} ${high}h1V${top}h-1zM${x} ${bottom}h1V${Math.max(low, bottom)}h-1z`
            const body = filled
                ? `<rect x="${x - 2}" y="${top}" width="5" height="${Math.max(bottom - top, 1)}" fill="#0ff"/>`
                : `<rect x="${x - 1.5}" y="${top + 0.5}" width="4" height="${Math.max(bottom - top, 1)}" stroke="#0ff" fill="none"/>`
            return `<path d="${wick}" fill="#0ff"/>${body}`
        }).join('')).join('')
    }

    _drawWaves() {
        const plain = WAVES.map(([text, bar, y, color = '#ff0']) => `<text x="${barX(bar)}" y="${y}" fill="${color}" text-anchor="middle">${text}</text>`)
        const circled = CIRCLED.map(([text, bar, y]) => `
            <circle cx="${barX(bar)}" cy="${y}" r="8" fill="#ff0"/>
            <text x="${barX(bar)}" y="${y + 6}" text-anchor="middle">${text}</text>`)
        const targets = TARGETS.map(([text, y]) => `<text x="${barX(LAST_BAR)}" y="${y}" fill="#ff0">${text}</text>`)
        return [...plain, ...circled, ...targets].join('')
    }

    _getHTML() {
        const rows = [['OP', '28375', 'cyan'], ['HI', '28410', 'cyan'], ['LO', '28320', 'cyan'], ['CL', '28355', 'cyan'], ['MA', '28091', 'yellow'], ['MA', '28128', 'blue']]
        const levels = ['28560', '28555', '28560', '28560', '28565', '28570', '28575', '28580', '28585', '28580', '28585', '28585', '28580', '28580', '28585']
        const ticks = Array.from({ length: 42 }, (_, i) => {
            const y = Math.round(5 + i * 13.8)
            const length = i % 10 === 6 ? 8 : i % 5 === 1 ? 4 : 2
            return `<path d="M2 ${y}h${length}v1h-${length}z"/>`
        })
        return `
            <div class="plot">
                <svg>
                    ${drawGrid({ majors: [88, 226, 364, 502], minors: [19, 157, 295, 433, 571], columnTops: range(5, 572, 13.8) })}
                    <g fill="none" stroke-width="2">
                        <polyline points="${BLUE_MA}" stroke="#00f"/>
                        <polyline points="${YELLOW_MA}" stroke="#ff0"/>
                    </g>
                    <g shape-rendering="crispEdges">${this._drawCandles()}</g>
                    ${this._drawWaves()}
                    <g stroke="#f00" shape-rendering="crispEdges">
                        <line x1="0" x2="100%" y1="238.5" y2="238.5"/>
                        <line x1="41.5" x2="41.5" y1="138" y2="579"/>
                        <line x1="41.5" x2="41.5" y1="114" y2="138" stroke="#fff"/>
                    </g>
                </svg>
                <table class="legend">
                    ${rows.map(([name, value, color]) => `<tr class="${color}"><td>${name}</td><td>${value}</td></tr>`).join('')}
                </table>
                <div class="levels">${levels.map(level => `<b>${level}.000</b>`).join('')}</div>
            </div>
            <div class="axis">
                <svg fill="#fff" shape-rendering="crispEdges">
                    <path d="M0 0h2v598H0zM0 0h60v1H0zM59 0h1v598h-1z"/>
                    ${ticks.join('')}
                    <text x="11" y="94">28500.</text>
                    <text x="11" y="232">28000.</text>
                    <text x="11" y="370">27500.</text>
                    <text x="11" y="508">27000.</text>
                </svg>
                <span class="marker">7955.35</span>
                <button class="scale" aria-label="Scale"><svg viewBox="0 0 30 19">${scales}</svg></button>
            </div>
        `
    }

}

class DmiChart extends GetElement {

    _getStyles() {
        return `
            ${PLOT_STYLES}
            :host { height: 307px; }
            .plot { height: 288px; }
            .plot svg { height: 288px; }
            .axis { grid-row: 1 / 3; grid-column: 2; }
            .axis svg { height: 307px; }
            .legend th { background: none; color: #fff; }
            .legend td:first-child { width: 40px; }
            .cyan { color: #0ff; }
            .green { color: #0f0; }
            .pink { color: #f0f; }
            .marker { top: 0; height: 16px; padding-left: 9px; line-height: 16px; }
            ::slotted(study-tabs) { grid-column: 1; }
        `
    }

    _getHTML() {
        const ticks = Array.from({ length: 47 }, (_, i) => {
            const y = 9 + i * 6
            const length = i % 10 === 2 ? 8 : i % 10 === 7 ? 4 : 2
            return `<path d="M2 ${y}h${length}v1h-${length}z"/>`
        })
        return `
            <div class="plot">
                <svg>
                    ${drawGrid({ majors: [21, 81, 141, 201, 261], minors: [51, 111, 171, 231], columnTops: range(3, 285, 6) })}
                    <line x1="41.5" x2="41.5" y1="0" y2="288" stroke="#f00" shape-rendering="crispEdges"/>
                    <g fill="none" shape-rendering="crispEdges">
                        <polyline points="${MINUS_DM}" stroke="#f0f"/>
                        <polyline points="${PLUS_DM}" stroke="#0f0"/>
                        <polyline points="${ADX}" stroke="#0ff"/>
                        <line x1="0" x2="100%" y1="6.5" y2="6.5" stroke="#f00"/>
                    </g>
                </svg>
                <table class="legend">
                    <tr><th colspan="2">ADX/DMI 96</th></tr>
                    <tr class="cyan"><td>ADX</td><td>8.12</td></tr>
                    <tr class="green"><td>+DM</td><td>20.91</td></tr>
                    <tr class="pink"><td>-DM</td><td>24.29</td></tr>
                </table>
            </div>
            <slot></slot>
            <div class="axis">
                <svg fill="#fff" shape-rendering="crispEdges">
                    <path d="M0 0h2v307H0zM0 306h60v1H0zM59 0h1v307h-1z"/>
                    ${ticks.join('')}
                    ${['30.00', '25.00', '20.00', '15.00', '10.00'].map((text, i) => `<text x="11" y="${28 + i * 60}">${text}</text>`).join('')}
                </svg>
                <span class="marker">31.24</span>
            </div>
        `
    }

}

class StudyTabs extends GetElement {

    _getStyles() {
        return `
            :host {
                display: flex;
                height: 19px;
                margin-right: 2px;
                background: #f0f0f0;
                font: 11px/15px "Liberation Sans", Arial, sans-serif;
            }
            button { padding: 0; border: none; background: none; font: inherit; color: #000; }
            .arrow {
                width: 21px;
                border: 1px solid #fff;
                border-right: 2px solid #868686;
                border-bottom: 1px solid #868686;
                background: #f0f0f0;
            }
            .arrow svg { display: block; margin: 0 auto; }
            .tab { position: relative; height: 19px; margin-right: -6px; }
            .arrow + .tab { margin-left: 1px; }
            .tab svg { display: block; }
            .tab span { position: absolute; inset: 0; }
            .active { z-index: 1; }
        `
    }

    _getHTML() {
        const tabs = [['Osc 5,35', 61], ['Osc 24,96', 66], ['ADX/DMI 96', 75], ['CCI 96', 45], ['MACD 24, 48, 48', 99]]
        return `
            <button class="arrow" aria-label="Previous study"><svg width="10" height="12"><path d="M7 1v10L2 6z"/></svg></button>
            <button class="arrow" aria-label="Next study"><svg width="10" height="12"><path d="M3 1v10l5-5z"/></svg></button>
            ${tabs.map(([text, width]) => {
                const active = text.startsWith('ADX')
                return `
                    <button class="tab ${active ? 'active' : ''}">
                        <svg width="${width}" height="19"><path d="M.5 0l6 18.500h${width - 13}l6-18.500" fill="${active ? '#fff' : '#f0f0f0'}" stroke="#000"/></svg>
                        <span>${text}</span>
                    </button>`
            }).join('')}
        `
    }

}

class DateAxis extends GetElement {

    _getStyles() {
        return `
            :host {
                display: grid;
                grid-template-columns: minmax(0, 1fr) 62px;
                height: 22px;
                font: bold 16px/20px "Liberation Sans", Arial, sans-serif;
            }
            .dates { margin-right: 2px; border: 1px solid #fff; border-bottom: 1px solid #868686; background: #000; }
            svg { display: block; width: 100%; height: 20px; }
            .corner { background: #00f; }
        `
    }

    _getHTML() {
        const dates = ['10/02/23', '10/09/23', '10/16/23', '10/23/23', '10/30/23']
        return `
            <div class="dates">
                <svg fill="#fff">
                    ${dates.map((date, i) => `<path d="M${barX(WEEKS[i]) - 1} 0h1v20h-1z"/><text x="${barX(WEEKS[i]) + 1}" y="16">${date}</text>`).join('')}
                </svg>
            </div>
            <div class="corner"></div>
        `
    }

}

class StatusBar extends GetElement {

    _getStyles() {
        return `
            :host {
                display: flex;
                align-items: stretch;
                height: 18px;
                padding-top: 4px;
                border-bottom: 1px solid #44546a;
                font: 14px/22px ${UI_FONT};
                color: #111;
            }
            .help { flex: 1; padding-left: 2px; }
            .page { width: 484px; padding-left: 1px; border: solid #a0a0a0; border-width: 1px 0 0 1px; line-height: 20px; }
        `
    }

    _getHTML() {
        return `
            <span class="help">For Help, press F1</span>
            <span class="page">Page: 1 - FTSEMIB B</span>
        `
    }

}

class GetApp extends GetElement {

    _getStyles() {
        return `
            :host { display: flex; flex-direction: column; }
            main { display: flex; align-items: flex-start; }
            .panes {
                flex: 1;
                min-width: 0;
                border-left: 1px solid #868686;
            }
            .rule { height: 3px; border-top: 1px solid #fff; border-bottom: 2px solid #777; }
        `
    }

    _getHTML() {
        return `
            <title-bar></title-bar>
            <menu-bar></menu-bar>
            <tool-strip></tool-strip>
            <main>
                <side-bar side="left"></side-bar>
                <div class="panes">
                    <quote-line></quote-line>
                    <div class="rule"></div>
                    <price-chart></price-chart>
                    <div class="rule"></div>
                    <dmi-chart><study-tabs></study-tabs></dmi-chart>
                    <div class="rule"></div>
                    <date-axis></date-axis>
                </div>
                <side-bar side="right"></side-bar>
            </main>
            <status-bar></status-bar>
        `
    }

}

customElements.define('tool-button', ToolButton)
customElements.define('title-bar', TitleBar)
customElements.define('menu-bar', MenuBar)
customElements.define('tool-strip', ToolStrip)
customElements.define('side-bar', SideBar)
customElements.define('quote-line', QuoteLine)
customElements.define('price-chart', PriceChart)
customElements.define('dmi-chart', DmiChart)
customElements.define('study-tabs', StudyTabs)
customElements.define('date-axis', DateAxis)
customElements.define('status-bar', StatusBar)
customElements.define('get-app', GetApp)
</script>
</body>
</html>
